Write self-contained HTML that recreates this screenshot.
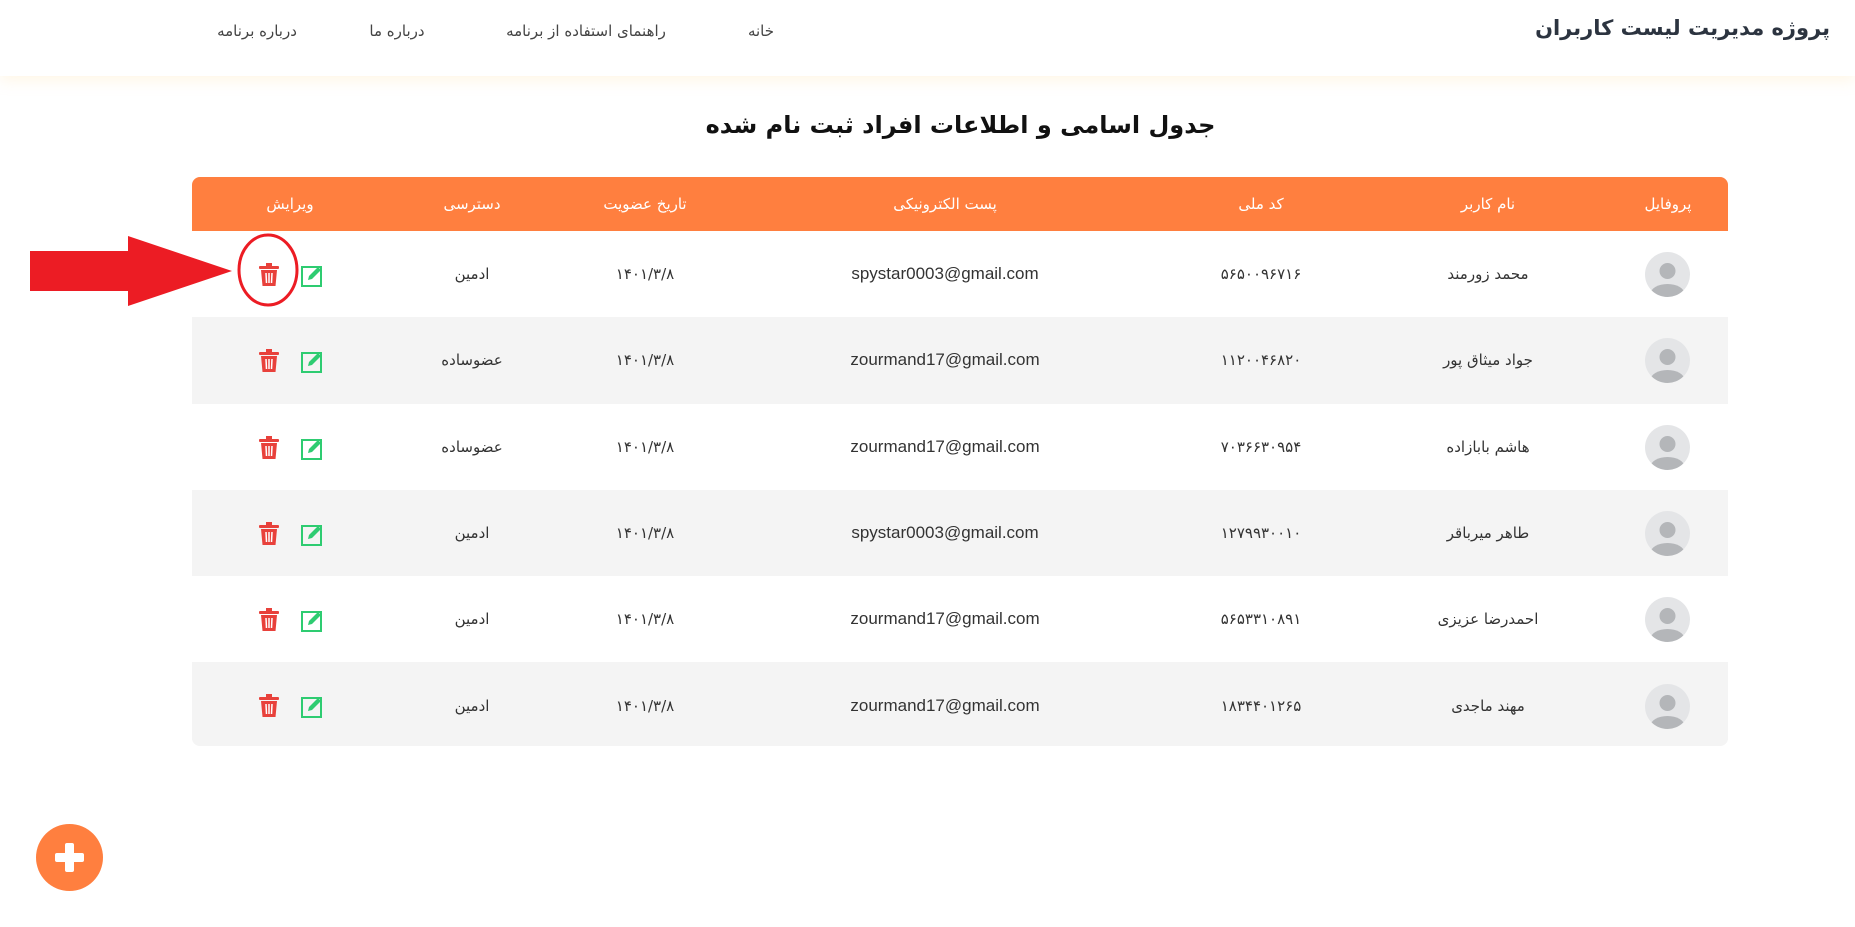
<!DOCTYPE html>
<html lang="fa" dir="rtl"><head><meta charset="utf-8">
<style>
*{margin:0;padding:0;box-sizing:border-box}
body{width:1855px;height:927px;background:#fff;font-family:"DejaVu Sans","Liberation Sans",sans-serif;color:#333;position:relative;overflow:hidden}
.nav{position:absolute;left:0;top:0;width:1855px;height:76px;background:#fff;box-shadow:0 4px 14px rgba(255,220,150,.25)}
.brand{position:absolute;right:25px;top:16px;font-size:21px;font-weight:bold;color:#2c3440;white-space:nowrap}
.link{position:absolute;top:22px;font-size:15px;color:#444;white-space:nowrap;transform:translateX(-50%)}
h1{position:absolute;top:111px;left:33px;width:1855px;text-align:center;font-size:24px;font-weight:bold;color:#111;direction:rtl}
.tbl{position:absolute;left:192px;top:177px;width:1536px;height:569px;border-radius:8px;overflow:hidden;background:#f4f4f4}
.head{height:54px;background:#ff7f3f;color:#fff;position:relative}
.row{height:86.3px;position:relative}
.row.w{background:#fff}.row.g{background:#f4f4f4}
.c{position:absolute;top:50%;transform:translate(-50%,-50%);white-space:nowrap;font-size:15px}
.head .c{font-size:15px;color:#fff}
.em{font-family:"Liberation Sans",sans-serif;font-size:17px;color:#333}
.av{position:absolute;left:1453px;top:50%;width:45px;height:45px;margin-top:-22px;border-radius:50%;background:#e4e5e7;overflow:hidden}
.fab{position:absolute;left:36px;top:824px;width:67px;height:67px;border-radius:50%;background:#ff7f3f}
</style></head><body>
<div class="nav">
<div class="brand">پروژه مدیریت لیست کاربران</div>
<div class="link" style="left:761px">خانه</div>
<div class="link" style="left:586px">راهنمای استفاده از برنامه</div>
<div class="link" style="left:397px">درباره ما</div>
<div class="link" style="left:257px">درباره برنامه</div>
</div>
<h1>جدول اسامی و اطلاعات افراد ثبت نام شده</h1>
<div class="tbl">
<div class="head">
<div class="c" style="left:1476px">پروفایل</div>
<div class="c" style="left:1296px">نام کاربر</div>
<div class="c" style="left:1069px">کد ملی</div>
<div class="c" style="left:753px">پست الکترونیکی</div>
<div class="c" style="left:453px">تاریخ عضویت</div>
<div class="c" style="left:280px">دسترسی</div>
<div class="c" style="left:98px">ویرایش</div>
</div>
<div class="row w"><div class="av"><svg width="45" height="45"><circle cx="22.5" cy="19" r="8" fill="#b4b6b9"/><ellipse cx="22.5" cy="42" rx="17" ry="10" fill="#b4b6b9"/></svg></div>
<div class="c" style="left:1296px">محمد زورمند</div><div class="c" style="left:1069px">۵۶۵۰۰۹۶۷۱۶</div><div class="c em" style="left:753px">spystar0003@gmail.com</div><div class="c" style="left:453px">۱۴۰۱/۳/۸</div><div class="c" style="left:280px">ادمین</div>
<svg style="position:absolute;left:67px;top:32px" width="66" height="24"><g fill="#e8413b"><rect x="0" y="3" width="20" height="3" rx="1"/><rect x="7" y="0" width="6" height="3"/><path d="M2 7h16l-1.5 16h-13z"/></g><g stroke="#fff" stroke-width="1.5"><line x1="7" y1="10" x2="7.5" y2="20"/><line x1="10" y1="10" x2="10" y2="20"/><line x1="13" y1="10" x2="12.5" y2="20"/></g><g transform="translate(42,2)"><rect x="1" y="2" width="19" height="19" fill="none" stroke="#2ecc71" stroke-width="2"/><path d="M7 15l1-4 9-9 3 3-9 9z" fill="#2ecc71"/></g></svg></div>
<div class="row g"><div class="av"><svg width="45" height="45"><circle cx="22.5" cy="19" r="8" fill="#b4b6b9"/><ellipse cx="22.5" cy="42" rx="17" ry="10" fill="#b4b6b9"/></svg></div>
<div class="c" style="left:1296px">جواد میثاق پور</div><div class="c" style="left:1069px">۱۱۲۰۰۴۶۸۲۰</div><div class="c em" style="left:753px">zourmand17@gmail.com</div><div class="c" style="left:453px">۱۴۰۱/۳/۸</div><div class="c" style="left:280px">عضوساده</div>
<svg style="position:absolute;left:67px;top:32px" width="66" height="24"><g fill="#e8413b"><rect x="0" y="3" width="20" height="3" rx="1"/><rect x="7" y="0" width="6" height="3"/><path d="M2 7h16l-1.5 16h-13z"/></g><g stroke="#fff" stroke-width="1.5"><line x1="7" y1="10" x2="7.5" y2="20"/><line x1="10" y1="10" x2="10" y2="20"/><line x1="13" y1="10" x2="12.5" y2="20"/></g><g transform="translate(42,2)"><rect x="1" y="2" width="19" height="19" fill="none" stroke="#2ecc71" stroke-width="2"/><path d="M7 15l1-4 9-9 3 3-9 9z" fill="#2ecc71"/></g></svg></div>
<div class="row w"><div class="av"><svg width="45" height="45"><circle cx="22.5" cy="19" r="8" fill="#b4b6b9"/><ellipse cx="22.5" cy="42" rx="17" ry="10" fill="#b4b6b9"/></svg></div>
<div class="c" style="left:1296px">هاشم بابازاده</div><div class="c" style="left:1069px">۷۰۳۶۶۳۰۹۵۴</div><div class="c em" style="left:753px">zourmand17@gmail.com</div><div class="c" style="left:453px">۱۴۰۱/۳/۸</div><div class="c" style="left:280px">عضوساده</div>
<svg style="position:absolute;left:67px;top:32px" width="66" height="24"><g fill="#e8413b"><rect x="0" y="3" width="20" height="3" rx="1"/><rect x="7" y="0" width="6" height="3"/><path d="M2 7h16l-1.5 16h-13z"/></g><g stroke="#fff" stroke-width="1.5"><line x1="7" y1="10" x2="7.5" y2="20"/><line x1="10" y1="10" x2="10" y2="20"/><line x1="13" y1="10" x2="12.5" y2="20"/></g><g transform="translate(42,2)"><rect x="1" y="2" width="19" height="19" fill="none" stroke="#2ecc71" stroke-width="2"/><path d="M7 15l1-4 9-9 3 3-9 9z" fill="#2ecc71"/></g></svg></div>
<div class="row g"><div class="av"><svg width="45" height="45"><circle cx="22.5" cy="19" r="8" fill="#b4b6b9"/><ellipse cx="22.5" cy="42" rx="17" ry="10" fill="#b4b6b9"/></svg></div>
<div class="c" style="left:1296px">طاهر میرباقر</div><div class="c" style="left:1069px">۱۲۷۹۹۳۰۰۱۰</div><div class="c em" style="left:753px">spystar0003@gmail.com</div><div class="c" style="left:453px">۱۴۰۱/۳/۸</div><div class="c" style="left:280px">ادمین</div>
<svg style="position:absolute;left:67px;top:32px" width="66" height="24"><g fill="#e8413b"><rect x="0" y="3" width="20" height="3" rx="1"/><rect x="7" y="0" width="6" height="3"/><path d="M2 7h16l-1.5 16h-13z"/></g><g stroke="#fff" stroke-width="1.5"><line x1="7" y1="10" x2="7.5" y2="20"/><line x1="10" y1="10" x2="10" y2="20"/><line x1="13" y1="10" x2="12.5" y2="20"/></g><g transform="translate(42,2)"><rect x="1" y="2" width="19" height="19" fill="none" stroke="#2ecc71" stroke-width="2"/><path d="M7 15l1-4 9-9 3 3-9 9z" fill="#2ecc71"/></g></svg></div>
<div class="row w"><div class="av"><svg width="45" height="45"><circle cx="22.5" cy="19" r="8" fill="#b4b6b9"/><ellipse cx="22.5" cy="42" rx="17" ry="10" fill="#b4b6b9"/></svg></div>
<div class="c" style="left:1296px">احمدرضا عزیزی</div><div class="c" style="left:1069px">۵۶۵۳۳۱۰۸۹۱</div><div class="c em" style="left:753px">zourmand17@gmail.com</div><div class="c" style="left:453px">۱۴۰۱/۳/۸</div><div class="c" style="left:280px">ادمین</div>
<svg style="position:absolute;left:67px;top:32px" width="66" height="24"><g fill="#e8413b"><rect x="0" y="3" width="20" height="3" rx="1"/><rect x="7" y="0" width="6" height="3"/><path d="M2 7h16l-1.5 16h-13z"/></g><g stroke="#fff" stroke-width="1.5"><line x1="7" y1="10" x2="7.5" y2="20"/><line x1="10" y1="10" x2="10" y2="20"/><line x1="13" y1="10" x2="12.5" y2="20"/></g><g transform="translate(42,2)"><rect x="1" y="2" width="19" height="19" fill="none" stroke="#2ecc71" stroke-width="2"/><path d="M7 15l1-4 9-9 3 3-9 9z" fill="#2ecc71"/></g></svg></div>
<div class="row g"><div class="av"><svg width="45" height="45"><circle cx="22.5" cy="19" r="8" fill="#b4b6b9"/><ellipse cx="22.5" cy="42" rx="17" ry="10" fill="#b4b6b9"/></svg></div>
<div class="c" style="left:1296px">مهند ماجدی</div><div class="c" style="left:1069px">۱۸۳۴۴۰۱۲۶۵</div><div class="c em" style="left:753px">zourmand17@gmail.com</div><div class="c" style="left:453px">۱۴۰۱/۳/۸</div><div class="c" style="left:280px">ادمین</div>
<svg style="position:absolute;left:67px;top:32px" width="66" height="24"><g fill="#e8413b"><rect x="0" y="3" width="20" height="3" rx="1"/><rect x="7" y="0" width="6" height="3"/><path d="M2 7h16l-1.5 16h-13z"/></g><g stroke="#fff" stroke-width="1.5"><line x1="7" y1="10" x2="7.5" y2="20"/><line x1="10" y1="10" x2="10" y2="20"/><line x1="13" y1="10" x2="12.5" y2="20"/></g><g transform="translate(42,2)"><rect x="1" y="2" width="19" height="19" fill="none" stroke="#2ecc71" stroke-width="2"/><path d="M7 15l1-4 9-9 3 3-9 9z" fill="#2ecc71"/></g></svg></div>
</div>
<svg style="position:absolute;left:0;top:230px" width="310" height="90">
<path d="M30 21H128V6L232 41L128 76V61H30Z" fill="#ec1c24"/>
<ellipse cx="268" cy="40" rx="29" ry="35" fill="none" stroke="#ec1c24" stroke-width="3"/>
</svg>
<div class="fab"><svg width="67" height="67"><rect x="29" y="19" width="9" height="29" rx="2" fill="#fff"/><rect x="19" y="29" width="29" height="9" rx="2" fill="#fff"/></svg></div>
</body></html>
